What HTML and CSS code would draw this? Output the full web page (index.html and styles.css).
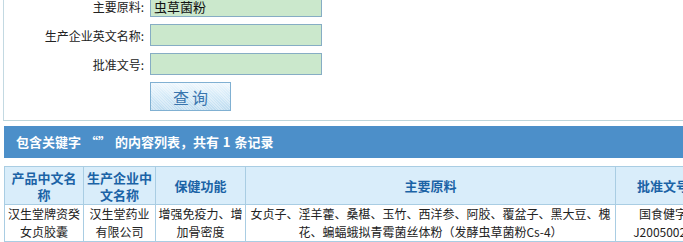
FILE: index.html
```html
<!DOCTYPE html>
<html lang="zh-CN">
<head>
    <meta charset="UTF-8">
    <title>保健食品查询</title>
    <link rel="stylesheet" href="styles.css">
</head>
<body>
    <div class="search-box">
        <div class="form-row">
            <label>主要原料:</label>
            <input class="field" type="text" value="虫草菌粉">
        </div>
        <div class="form-row">
            <label>生产企业英文名称:</label>
            <input class="field" type="text">
        </div>
        <div class="form-row">
            <label>批准文号:</label>
            <input class="field" type="text">
        </div>
        <div class="form-row">
            <span></span>
            <button class="search-btn">查询</button>
        </div>
    </div>

    <div class="result-bar">包含关键字 “” 的内容列表，共有 1 条记录</div>

    <table class="result-table">
        <colgroup>
            <col class="c-name">
            <col class="c-company">
            <col class="c-func">
            <col class="c-raw">
            <col class="c-code">
        </colgroup>
        <thead>
            <tr>
                <th>产品中文名称</th>
                <th>生产企业中文名称</th>
                <th>保健功能</th>
                <th>主要原料</th>
                <th>批准文号</th>
            </tr>
        </thead>
        <tbody>
            <tr>
                <td>汉生堂牌资癸女贞胶囊</td>
                <td>汉生堂药业有限公司</td>
                <td>增强免疫力、增加骨密度</td>
                <td>女贞子、淫羊藿、桑椹、玉竹、西洋参、阿胶、覆盆子、黑大豆、槐花、蝙蝠蛾拟青霉菌丝体粉（发酵虫草菌粉Cs-4）</td>
                <td>国食健字J20050023</td>
            </tr>
        </tbody>
    </table>
</body>
</html>
```

FILE: styles.css
```css
html, body {
    overflow: hidden;
}

body {
    margin: 0;
    font-family: "Noto Sans CJK SC", "DejaVu Sans", sans-serif;
    font-size: 12px;
    color: #222;
    background-color: #fff;
}

.search-box {
    width: 720px;
    margin: -5px 0 0 3px;
    padding-bottom: 9px;
    border-left: 1px solid #c3d9e2;
    border-bottom: 1px solid #bdd5da;
    display: flex;
    flex-direction: column;
    gap: 7px;
}

.form-row {
    display: grid;
    grid-template-columns: 140px auto;
    column-gap: 6px;
    align-items: center;
    justify-items: start;
}

.form-row label {
    justify-self: end;
    color: #222;
}

.field {
    box-sizing: border-box;
    width: 172px;
    height: 22px;
    margin: 0;
    padding: 0 3px;
    border: 1px solid #86adc4;
    background-color: #cbe8cc;
    font-family: inherit;
    font-size: 13px;
    color: #111;
    outline: none;
}

.search-btn {
    box-sizing: border-box;
    width: 81px;
    height: 29px;
    margin: 0;
    padding: 0;
    border: 1px solid #80b0d2;
    background-color: #d2e8f6;
    background-image:
        repeating-linear-gradient(45deg, rgba(255,255,255,0.35) 0 1px, transparent 1px 2px),
        linear-gradient(to bottom, #eef7fd 0%, #d6ebf8 45%, #bedcf0 100%);
    font-family: inherit;
    font-size: 16px;
    letter-spacing: 3px;
    text-indent: 3px;
    color: #3a76ae;
    cursor: pointer;
}

.result-bar {
    width: 720px;
    height: 32px;
    margin: 5px 0 0 4px;
    padding-left: 12px;
    background-color: #4c8fc9;
    color: #fff;
    font-size: 13px;
    font-weight: bold;
    line-height: 31px;
    white-space: pre;
    word-spacing: 1px;
}

.result-table {
    width: 706px;
    margin: 8px 0 0 4px;
    border-collapse: collapse;
    table-layout: fixed;
}

.c-name { width: 79px; }
.c-company { width: 72px; }
.c-func { width: 90px; }
.c-raw { width: 370px; }
.c-code { width: 95px; }

.result-table th,
.result-table td {
    border: 1px solid #a9cde3;
    text-align: center;
    vertical-align: middle;
}

.result-table th {
    height: 37px;
    padding: 0 3px;
    background-color: #d9edfa;
    color: #1b63a6;
    font-size: 13px;
    font-weight: bold;
    line-height: 17px;
}

.result-table td {
    padding: 0 2px;
    line-height: 18px;
    height: 35px;
}
```
